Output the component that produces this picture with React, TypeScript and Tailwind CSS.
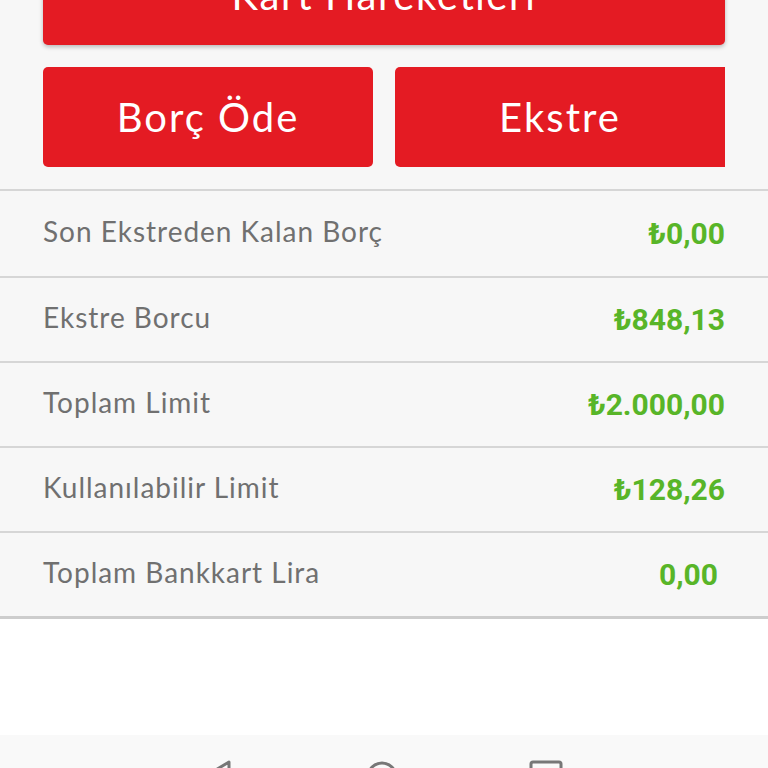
import React from "react";

const rows = [
  { label: "Son Ekstreden Kalan Borç", value: "₺0,00" },
  { label: "Ekstre Borcu", value: "₺848,13" },
  { label: "Toplam Limit", value: "₺2.000,00" },
  { label: "Kullanılabilir Limit", value: "₺128,26" },
  { label: "Toplam Bankkart Lira", value: "0,00", inset: true },
];

export default function App() {
  return (
    <div className="w-[768px] h-[768px] overflow-hidden bg-white flex flex-col font-['Lato',sans-serif]">
      {/* Card actions */}
      <div className="bg-[#f7f7f7] px-[43px] pb-[22px]">
        <button className="block w-full h-[100px] -mt-[55px] rounded-[5px] bg-[#e41b23] text-white text-[40px] tracking-[0.04em] shadow-[0_2px_4px_rgba(0,0,0,0.25)]">
          Kart Hareketleri
        </button>
        <div className="mt-[22px] flex gap-[22px]">
          <button className="flex-1 h-[100px] rounded-[5px] bg-[#e41b23] text-white text-[40px] tracking-[0.05em]">
            Borç Öde
          </button>
          <button className="flex-1 h-[100px] rounded-l-[5px] bg-[#e41b23] text-white text-[40px] tracking-[0.05em]">
            Ekstre
          </button>
        </div>
      </div>

      {/* Summary rows */}
      <div className="bg-[#f7f7f7] border-t-2 border-[#d6d6d6] border-b-[3px] border-b-[#cdcdcd]">
        {rows.map((r, i) => (
          <div
            key={r.label}
            className={
              "h-[85px] flex items-center justify-between pl-[43px] " +
              (r.inset ? "pr-[50px] " : "pr-[43px] ") +
              (i > 0 ? "border-t-2 border-[#d6d6d6]" : "")
            }
          >
            <span className="text-[28px] text-[#707070] tracking-[0.035em] -mt-[6px]">{r.label}</span>
            <span className="font-['Roboto',sans-serif] font-bold text-[30px] text-[#58b528]">
              {r.value}
            </span>
          </div>
        ))}
      </div>

      <div className="flex-1" />

      {/* Android nav bar */}
      <div className="h-[33px] bg-[#f9f9f9] flex items-start justify-center gap-[130px] pt-[25px] pl-[20px] overflow-hidden">
        <svg width="30" height="30" viewBox="0 0 30 30" className="-ml-[20px]">
          <path d="M24 2 L4 14 L24 26 Z" fill="none" stroke="#777" strokeWidth="3" strokeLinejoin="round" />
        </svg>
        <svg width="34" height="34" viewBox="0 0 34 34">
          <circle cx="17" cy="17" r="14" fill="none" stroke="#777" strokeWidth="3" />
        </svg>
        <svg width="34" height="34" viewBox="0 0 34 34">
          <rect x="2" y="2" width="30" height="30" rx="2" fill="none" stroke="#777" strokeWidth="3" />
        </svg>
      </div>
    </div>
  );
}
